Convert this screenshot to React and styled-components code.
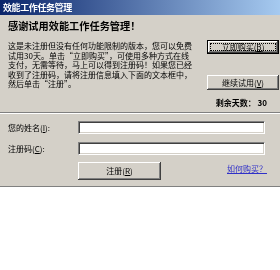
import React from "react";
import styled, { createGlobalStyle } from "styled-components";

const GlobalStyle = createGlobalStyle`
    html, body {
        margin: 0;
        padding: 0;
        background: #ffffff;
        overflow: hidden;
    }
    body {
        font-family: "Noto Sans CJK SC", "Liberation Sans", sans-serif;
        color: #000;
    }
`;

const Window = styled.div`
    width: 280px;
    display: flex;
    flex-direction: column;
    background: #d4d0c8;
    border-bottom: 1px solid #808080;
    box-shadow: 0 1px 0 #404040;
    -webkit-box-reflect: below 1px
        linear-gradient(transparent 62%, rgba(255, 255, 255, 0.38));
`;

const TitleBar = styled.div`
    height: 15px;
    display: flex;
    align-items: center;
    padding-left: 3px;
    background: linear-gradient(to right, #0a246a, #a6caf0);
    color: #fff;
    font-size: 9px;
    font-weight: bold;
    letter-spacing: -0.4px;
`;

const Top = styled.div`
    display: grid;
    grid-template-columns: 1fr 72px;
    padding: 5px 1px 0 8px;
`;

const Intro = styled.div`
    display: flex;
    flex-direction: column;
    white-space: nowrap;
`;

const Heading = styled.div`
    font-size: 10.2px;
    line-height: 12px;
    font-weight: bold;
    margin-bottom: 9px;
`;

const Text = styled.div`
    font-size: 8px;
    line-height: 9.5px;
`;

const Side = styled.div`
    display: flex;
    flex-direction: column;
    padding-top: 20px;
`;

const Button = styled.button`
    position: relative;
    height: ${(p) => p.$h || 14}px;
    width: ${(p) => (p.$w ? `${p.$w}px` : "100%")};
    margin-top: ${(p) => p.$mt || 0}px;
    padding: 0;
    background: #d4d0c8;
    font-family: inherit;
    font-size: 8px;
    line-height: 1;
    color: #000;
    border: ${(p) => (p.$default ? "1px solid #000" : "none")};
    box-shadow: inset -1px -1px #404040, inset 1px 1px #fff,
        inset -2px -2px #808080, inset 2px 2px #d4d0c8;
    &::after {
        content: "";
        display: ${(p) => (p.$default ? "block" : "none")};
        position: absolute;
        inset: 2px;
        border: 1px dotted #000;
    }
`;

const Days = styled.div`
    margin-top: 8px;
    padding-right: 12px;
    text-align: right;
    font-size: 8px;
    line-height: 10px;
    font-weight: bold;
    white-space: nowrap;
`;

const Separator = styled.div`
    margin-top: 4px;
    height: 1px;
    background: #808080;
    border-bottom: 1px solid #fff;
`;

const Form = styled.div`
    display: grid;
    grid-template-columns: 70px 187px;
    row-gap: 8px;
    align-items: center;
    padding: 7px 0 6px 8px;
`;

const Label = styled.label`
    font-size: 8px;
    line-height: 10px;
    white-space: nowrap;
`;

const Input = styled.input`
    box-sizing: border-box;
    height: 13px;
    width: 100%;
    margin: 0;
    padding: 0 2px;
    background: #fff;
    border: 1px solid;
    border-color: #808080 #fff #fff #808080;
    box-shadow: inset 1px 1px #404040, inset -1px -1px #d4d0c8;
    outline: none;
`;

const Actions = styled.div`
    grid-column: 2;
    display: flex;
    align-items: center;
    justify-content: space-between;
    margin-top: -1px;
    margin-right: -2px;
`;

const Link = styled.a`
    font-size: 8px;
    line-height: 10px;
    color: #3030c8;
    text-decoration: underline;
    cursor: pointer;
    margin-top: -4px;
`;

export default function App() {
    return (
        <>
            <GlobalStyle />
            <Window>
                <TitleBar>效能工作任务管理</TitleBar>
                <Top>
                    <Intro>
                        <Heading>感谢试用效能工作任务管理！</Heading>
                        <Text>这是未注册但没有任何功能限制的版本，您可以免费</Text>
                        <Text>试用30天。单击“立即购买”，可使用多种方式在线</Text>
                        <Text>支付，无需等待，马上可以得到注册码！如果您已经</Text>
                        <Text>收到了注册码，请将注册信息填入下面的文本框中，</Text>
                        <Text>然后单击“注册”。</Text>
                    </Intro>
                    <Side>
                        <Button $default $h={14}>
                            立即购买(<u>B</u>)
                        </Button>
                        <Button $h={15} $mt={21}>
                            继续试用(<u>V</u>)
                        </Button>
                        <Days>剩余天数： 30</Days>
                    </Side>
                </Top>
                <Separator />
                <Form>
                    <Label>您的姓名(<u>I</u>):</Label>
                    <Input />
                    <Label>注册码(<u>C</u>):</Label>
                    <Input />
                    <Actions>
                        <Button $w={83} $h={18}>
                            注册(<u>R</u>)
                        </Button>
                        <Link>如何购买？</Link>
                    </Actions>
                </Form>
            </Window>
        </>
    );
}
